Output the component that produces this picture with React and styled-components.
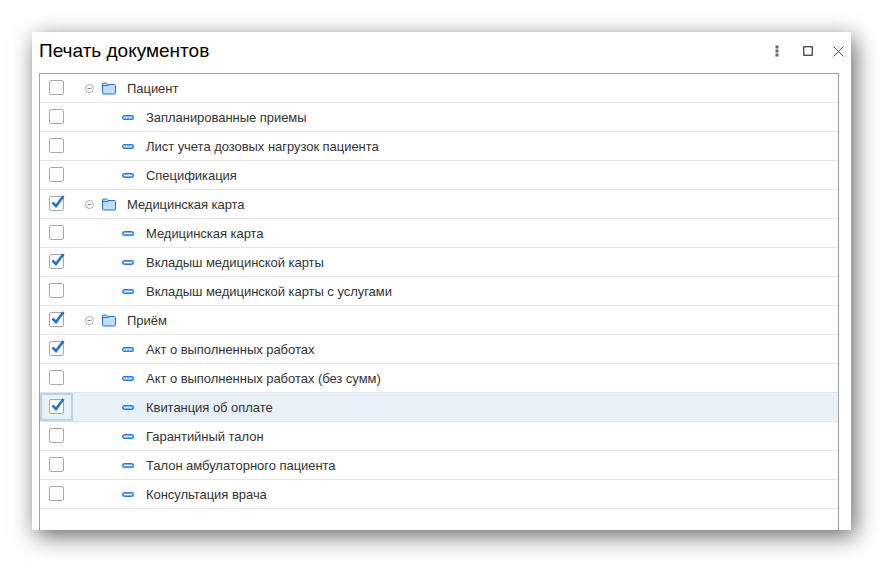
import React from "react";
import styled, { createGlobalStyle } from "styled-components";

const GlobalStyle = createGlobalStyle`
  html, body {
    margin: 0;
    padding: 0;
    background: #fff;
    overflow: hidden;
  }
  body {
    font-family: "Liberation Sans", Arial, sans-serif;
  }
`;

const Page = styled.div`
  width: 883px;
  height: 562px;
  padding: 32px;
  box-sizing: border-box;
`;

const Dialog = styled.div`
  width: 819px;
  height: 498px;
  background: #fff;
  box-shadow: 4px 6px 22px rgba(0, 0, 0, 0.6);
  display: flex;
  flex-direction: column;
  overflow: hidden;
`;

const Header = styled.div`
  height: 41px;
  flex: none;
  display: flex;
  align-items: center;
  padding: 0 0 3px 7px;
  box-sizing: border-box;
`;

const Title = styled.h1`
  flex: 1;
  margin: 0;
  font-size: 19px;
  font-weight: normal;
  color: #000;
`;

const HeaderButton = styled.button`
  width: 31px;
  height: 24px;
  padding: 0;
  border: 0;
  background: none;
  display: flex;
  align-items: center;
  justify-content: center;
`;

const CloseButton = styled(HeaderButton)`
  width: 25px;
  margin-left: 3px;
`;

const Tree = styled.div`
  flex: 1;
  margin: 0 12px 0 7px;
  border: 1px solid #a0a0a0;
  border-bottom: 0;
`;

const Row = styled.div`
  height: 29px;
  box-sizing: border-box;
  display: flex;
  border-bottom: 1px solid #e4e4e4;
`;

const CheckCell = styled.div`
  width: 33px;
  flex: none;
  display: flex;
  align-items: center;
  justify-content: center;
  box-sizing: border-box;
  padding-bottom: 1px;
  border: ${(p) => (p.$active ? "2px solid #b3d4f5" : "0")};
  background: ${(p) => (p.$active ? "#e8f1fa" : "transparent")};
`;

const Box = styled.div`
  width: 15px;
  height: 15px;
  box-sizing: border-box;
  border: 1px solid #a8a8a8;
  border-radius: 2px;
  background: #fff;
  position: relative;
`;

const Tick = styled.svg`
  position: absolute;
  left: 0;
  top: -4px;
`;

const Content = styled.div`
  flex: 1;
  display: flex;
  align-items: center;
  padding-left: ${(p) => (p.$child ? "49px" : "12px")};
  background: ${(p) => (p.$active ? "#e8f1fa" : "transparent")};
`;

const Label = styled.span`
  font-size: 13px;
  line-height: 15px;
  padding-top: 1px;
  letter-spacing: -0.04px;
  color: #333;
  white-space: nowrap;
  margin-left: ${(p) => (p.$child ? "12px" : "11px")};
`;

const Expander = styled.svg`
  margin-right: 8px;
  flex: none;
`;

const Kebab = () => (
  <svg width="4" height="12" viewBox="0 0 4 12">
    <rect x="0.5" y="0.5" width="3" height="3" fill="#666" />
    <rect x="0.5" y="4.5" width="3" height="3" fill="#666" />
    <rect x="0.5" y="8.5" width="3" height="3" fill="#666" />
  </svg>
);

const Maximize = () => (
  <svg width="10" height="10" viewBox="0 0 10 10">
    <rect x="0.75" y="0.75" width="8.5" height="8.5" fill="none" stroke="#333" strokeWidth="1.2" />
  </svg>
);

const Close = () => (
  <svg width="11" height="11" viewBox="0 0 11 11">
    <path d="M0.5 0.5L10.5 10.5M10.5 0.5L0.5 10.5" stroke="#555" strokeWidth="1" fill="none" />
  </svg>
);

const Folder = () => (
  <svg width="14" height="13" viewBox="0 0 14 13" style={{ flex: "none" }}>
    <path
      d="M0.5 3V2a1 1 0 0 1 1-1h3l1.5 1.5h6.5a1 1 0 0 1 1 1V11a1 1 0 0 1-1 1H1.5a1 1 0 0 1-1-1V3z"
      fill="#c6dcf5"
      stroke="#2272d4"
      strokeWidth="1"
    />
    <path d="M0.5 3.5h6" stroke="#2272d4" strokeWidth="1" fill="none" />
  </svg>
);

const Pill = () => (
  <svg width="12" height="5" viewBox="0 0 12 5" style={{ flex: "none" }}>
    <rect x="0.7" y="0.7" width="10.6" height="3.6" rx="1.8" fill="#dbe9fa" stroke="#2b7bd8" strokeWidth="1.4" />
  </svg>
);

const items = [
  { label: "Пациент", group: true },
  { label: "Запланированные приемы" },
  { label: "Лист учета дозовых нагрузок пациента" },
  { label: "Спецификация" },
  { label: "Медицинская карта", group: true, checked: true },
  { label: "Медицинская карта" },
  { label: "Вкладыш медицинской карты", checked: true },
  { label: "Вкладыш медицинской карты с услугами" },
  { label: "Приём", group: true, checked: true },
  { label: "Акт о выполненных работах", checked: true },
  { label: "Акт о выполненных работах (без сумм)" },
  { label: "Квитанция об оплате", checked: true, active: true },
  { label: "Гарантийный талон" },
  { label: "Талон амбулаторного пациента" },
  { label: "Консультация врача" },
];

const TreeRow = ({ item }) => (
  <Row>
    <CheckCell $active={item.active}>
      <Box>
        {item.checked && (
          <Tick width="16" height="17" viewBox="0 0 16 17">
            <path d="M2.5 9.5L6 13L13.5 3" fill="none" stroke="#1f72cf" strokeWidth="2.6" />
          </Tick>
        )}
      </Box>
    </CheckCell>
    <Content $child={!item.group} $active={item.active}>
      {item.group ? (
        <>
          <Expander width="9" height="9" viewBox="0 0 9 9">
            <circle cx="4.5" cy="4.5" r="4" fill="none" stroke="#aaa" strokeWidth="1" />
            <path d="M2.5 4.5h4" stroke="#888" strokeWidth="1" />
          </Expander>
          <Folder />
        </>
      ) : (
        <Pill />
      )}
      <Label $child={!item.group}>{item.label}</Label>
    </Content>
  </Row>
);

export default function App() {
  return (
    <Page>
      <GlobalStyle />
      <Dialog>
        <Header>
          <Title>Печать документов</Title>
          <HeaderButton><Kebab /></HeaderButton>
          <HeaderButton><Maximize /></HeaderButton>
          <CloseButton><Close /></CloseButton>
        </Header>
        <Tree>
          {items.map((item, i) => (
            <TreeRow key={i} item={item} />
          ))}
        </Tree>
      </Dialog>
    </Page>
  );
}
